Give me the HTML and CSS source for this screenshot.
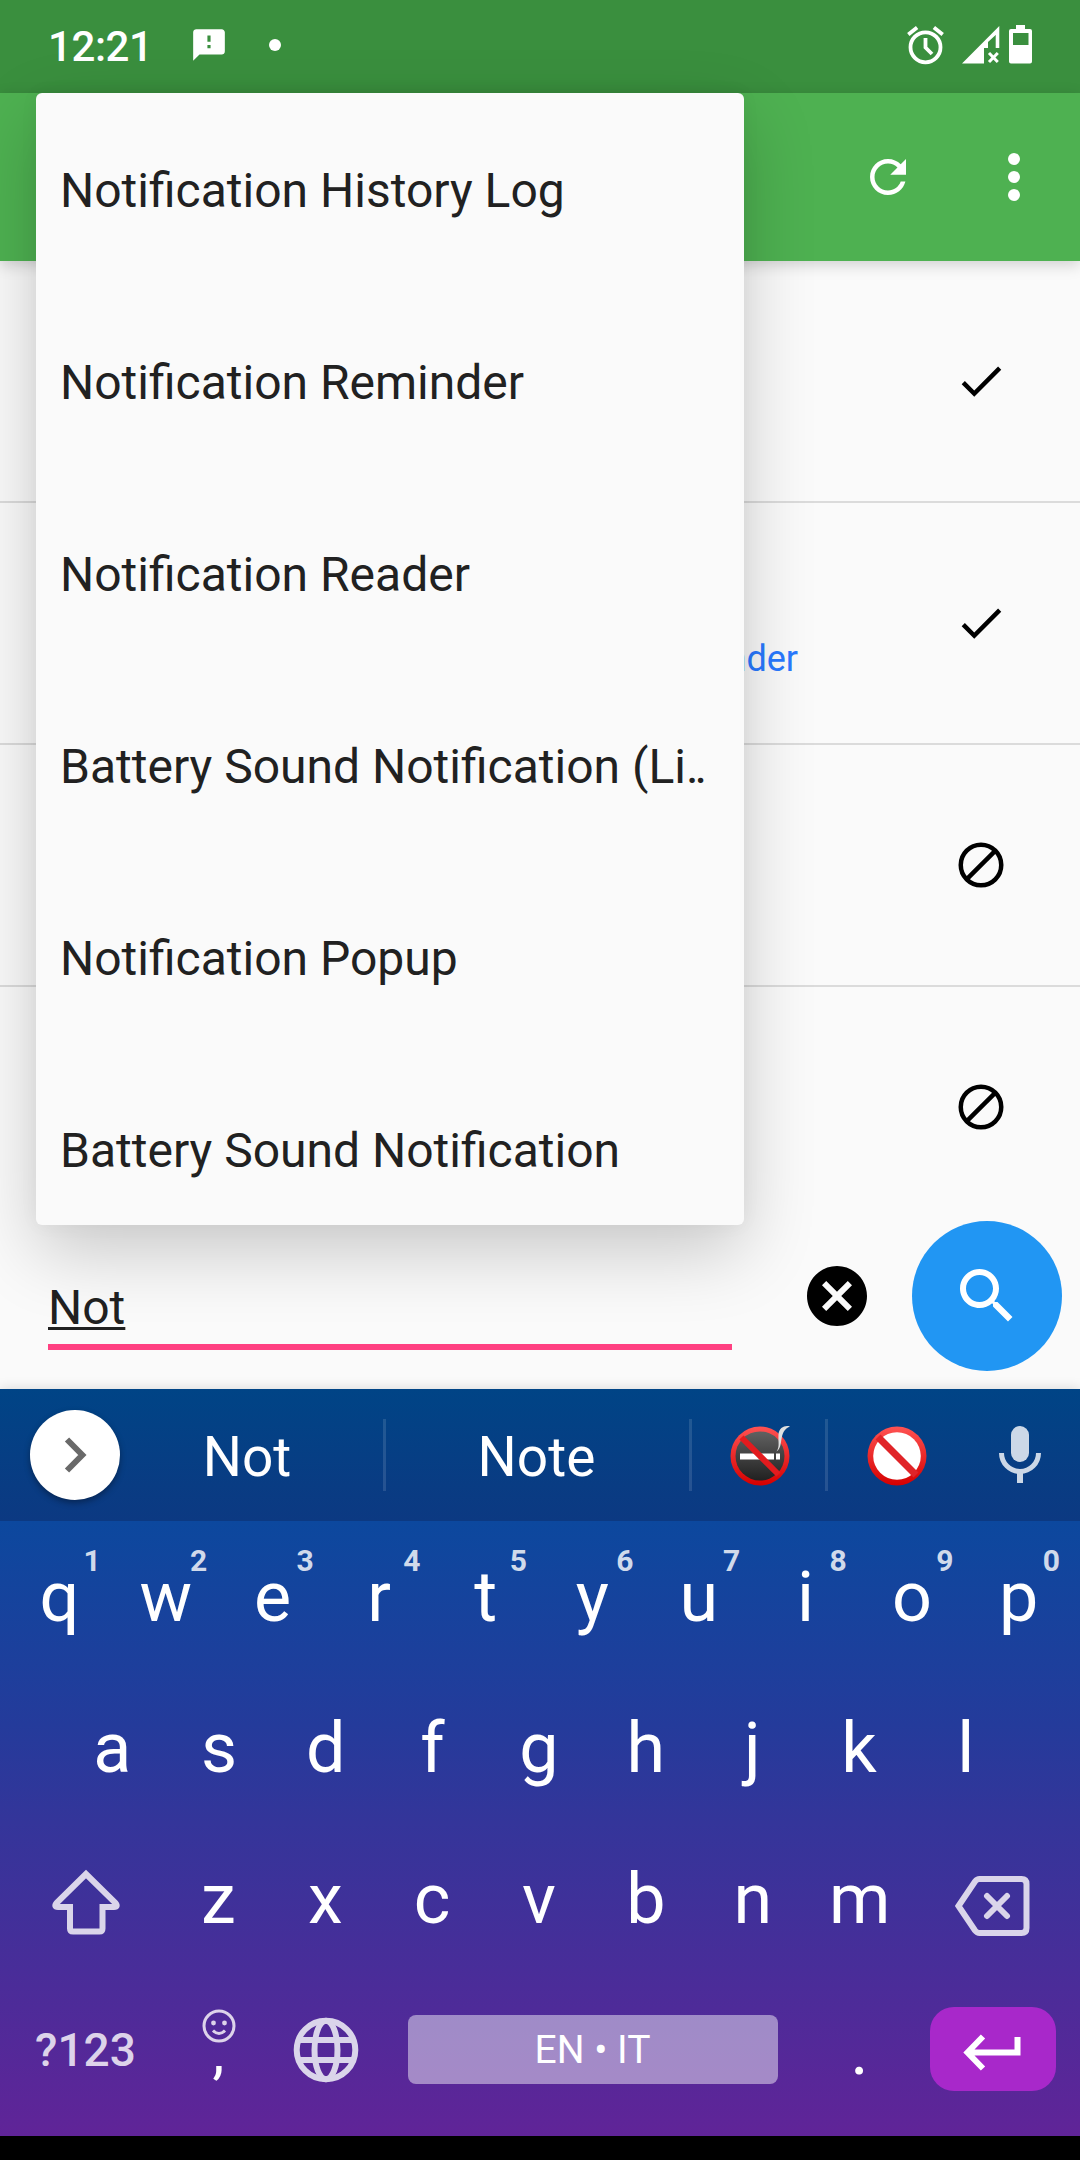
FILE: index.html
```html
<!DOCTYPE html>
<html lang="en">
<head>
  <meta charset="UTF-8" />
  <title>Notification apps</title>
  <link rel="stylesheet" href="styles.css">
</head>
<body>
  <div class="screen">
    <div class="status-bar">
      <span class="clock">12:21</span>
      <svg class="msg-icon" width="38" height="38" viewBox="0 0 24 24"><path d="M20 2H4c-1.1 0-2 .5-2 2v18l4-4h14c1.1 0 2-.5 2-2V4c0-1.100-.9-2-2-2zm-7 12h-2v-2h2v2zm0-4h-2V6h2v4z"/></svg>
      <span class="dot"></span>
      <svg class="status-icons" width="130" height="42" viewBox="904 24 130 42">
        <g fill="none" stroke="#fff">
          <circle cx="925.5" cy="47.300" r="15" stroke-width="3.800"/>
          <path d="M925.500 38v9.500l6.500 6.500M908.300 34.500l8.800-7M942.700 34.500l-8.800-7" stroke-width="3.800"/>
          <path d="M989 53l8.800 9M997.800 53l-8.800 9" stroke-width="3"/>
        </g>
        <path d="M962 63.500h22V48h4v-6l7.700-7v13h3.600V26z"/>
        <path fill-rule="evenodd" d="M1016 25h9v4h5q2 0 2 2v30.500q0 2-2 2h-19q-2 0-2-2V31q0-2 2-2h5zM1013 33v12h15.500V33z"/>
      </svg>
    </div>

    <div class="toolbar">
      <svg width="54" height="54" viewBox="0 0 24 24"><path d="M17.65 6.35C16.2 4.9 14.21 4 12 4c-4.42 0-7.99 3.58-7.99 8s3.57 8 7.99 8c3.730 0 6.840-2.550 7.730-6h-2.080c-.82 2.330-3.040 4-5.650 4-3.310 0-6-2.690-6-6s2.690-6 6-6c1.660 0 3.140.69 4.220 1.780L13 11h7V4l-2.350 2.350z"/></svg>
      <svg width="72" height="72" viewBox="0 0 24 24"><circle cx="12" cy="6" r="2"/><circle cx="12" cy="12" r="2"/><circle cx="12" cy="18" r="2"/></svg>
    </div>

    <div class="list">
      <div class="row">
        <svg width="54" height="54" viewBox="0 0 24 24"><path d="M9 16.170L4.830 12l-1.420 1.410L9 19 21 7l-1.410-1.410z"/></svg>
      </div>
      <div class="row">
        <span class="app-link">Reminder</span>
        <svg width="54" height="54" viewBox="0 0 24 24"><path d="M9 16.170L4.830 12l-1.420 1.410L9 19 21 7l-1.410-1.410z"/></svg>
      </div>
      <div class="row">
        <svg width="54" height="54" viewBox="0 0 24 24"><g fill="none" stroke="#000" stroke-width="2"><circle cx="12" cy="12" r="9"/><path d="M5.600 18.400L18.400 5.600"/></g></svg>
      </div>
      <div class="row last">
        <svg width="54" height="54" viewBox="0 0 24 24"><g fill="none" stroke="#000" stroke-width="2"><circle cx="12" cy="12" r="9"/><path d="M5.600 18.400L18.400 5.600"/></g></svg>
      </div>
    </div>

    <div class="search-bar">
      <div class="search-input"><span>Not</span></div>
      <svg class="clear" width="72" height="72" viewBox="0 0 24 24"><path d="M12 2C6.470 2 2 6.470 2 12s4.470 10 10 10 10-4.470 10-10S17.530 2 12 2zm5 13.590L15.590 17 12 13.410 8.410 17 7 15.590 10.590 12 7 8.410 8.410 7 12 10.590 15.590 7 17 8.410 13.410 12 17 15.590z"/></svg>
      <div class="search-btn">
        <svg width="72" height="72" viewBox="0 0 24 24"><path d="M15.500 14h-.79l-.28-.27C15.410 12.590 16 11.110 16 9.500 16 5.910 13.090 3 9.500 3S3 5.910 3 9.500 5.910 16 9.500 16c1.610 0 3.090-.59 4.230-1.570l.27.28v.79l5 4.990L20.490 19l-4.990-5zm-6 0C7.010 14 5 11.990 5 9.500S7.010 5 9.500 5 14 7.010 14 9.500 11.990 14 9.500 14z"/></svg>
      </div>
    </div>

    <div class="keyboard">
      <div class="suggestions">
        <div class="expand">
          <svg width="30" height="44" viewBox="0 0 30 44"><path d="M7 6.500L22.300 22 7 37.500" fill="none" stroke="#696969" stroke-width="6"/></svg>
        </div>
        <div class="word first">Not</div>
        <div class="word second">Note</div>
        <div class="word emoji">
          <svg width="62" height="62" viewBox="0 0 62 62">
            <defs>
              <linearGradient id="red" x1="0" y1="0" x2="0" y2="1"><stop offset="0" stop-color="#ff5252"/><stop offset="1" stop-color="#d50000"/></linearGradient>
              <linearGradient id="coal" x1="0" y1="0" x2="0" y2="1"><stop offset="0" stop-color="#616161"/><stop offset="1" stop-color="#212121"/></linearGradient>
            </defs>
            <circle cx="31" cy="31" r="29.500" fill="url(#red)"/>
            <circle cx="31" cy="31" r="24.500" fill="url(#coal)"/>
            <path d="M11 28.500h34v6H11zM47 28.500h4v6h-4z" fill="#fff"/>
            <path d="M12.500 12.500l37 37" stroke="#e31b1e" stroke-width="6"/>
            <path d="M47.500 26.500c8-5 1-20 13.500-25-5-1.500-11 1-11.500 8-.5 8 1.500 12-2 17z" fill="#e0e0e0"/>
          </svg>
        </div>
        <div class="word emoji end">
          <svg width="62" height="62" viewBox="0 0 62 62">
            <circle cx="31" cy="31" r="29.500" fill="url(#red)"/>
            <circle cx="31" cy="31" r="23.800" fill="#fff"/>
            <path d="M12 12l38 38" stroke="#e02428" stroke-width="7"/>
          </svg>
        </div>
        <div class="mic">
          <svg width="44" height="58" viewBox="0 0 44 58"><rect x="13" y="0" width="18" height="36" rx="9"/><path d="M3.500 27a18.500 18.500 0 0 0 37 0" fill="none" stroke="#ccd8e7" stroke-width="5"/><rect x="19" y="46" width="6" height="11"/></svg>
        </div>
      </div>

      <div class="keys">
        <div class="key-row">
          <div class="key">q<span class="hint">1</span></div>
          <div class="key">w<span class="hint">2</span></div>
          <div class="key">e<span class="hint">3</span></div>
          <div class="key">r<span class="hint">4</span></div>
          <div class="key">t<span class="hint">5</span></div>
          <div class="key">y<span class="hint">6</span></div>
          <div class="key">u<span class="hint">7</span></div>
          <div class="key">i<span class="hint">8</span></div>
          <div class="key">o<span class="hint">9</span></div>
          <div class="key">p<span class="hint">0</span></div>
        </div>
        <div class="key-row middle">
          <div class="key">a</div>
          <div class="key">s</div>
          <div class="key">d</div>
          <div class="key">f</div>
          <div class="key">g</div>
          <div class="key">h</div>
          <div class="key">j</div>
          <div class="key">k</div>
          <div class="key">l</div>
        </div>
        <div class="key-row">
          <div class="key wide">
            <svg class="shift" width="72" height="70" viewBox="0 0 72 70"><path d="M36 7L6.500 36Q3.500 40 8 40H20v21.500q0 3 3 3h26.500q3 0 3-3V40H64q4.500 0 1.500-4z"/></svg>
          </div>
          <div class="key">z</div>
          <div class="key">x</div>
          <div class="key">c</div>
          <div class="key">v</div>
          <div class="key">b</div>
          <div class="key">n</div>
          <div class="key">m</div>
          <div class="key wide">
            <svg class="backspace" width="80" height="64" viewBox="0 0 80 64"><path d="M5.500 32L22 7.500Q24 5 26.500 5h42q5 0 5 5v44q0 5-5 5h-42q-2.500 0-4.500-2.500zM34 22l20 20M54 22L34 42"/></svg>
          </div>
        </div>
        <div class="key-row">
          <div class="key wide symbols">?123</div>
          <div class="key comma">,
            <svg class="smiley" width="34" height="34" viewBox="0 0 34 34"><g fill="none" stroke="#ddd3ea" stroke-width="3"><circle cx="17" cy="17" r="15"/><path d="M11 21.500q6 6 12 0"/></g><circle cx="11.500" cy="14" r="2.400"/><circle cx="22.500" cy="14" r="2.400"/></svg>
          </div>
          <div class="key">
            <svg class="globe" width="66" height="66" viewBox="0 0 66 66"><circle cx="33" cy="33" r="29.300"/><ellipse cx="33" cy="33" rx="11.500" ry="29.300"/><path d="M6 23h54M6 43h54"/></svg>
          </div>
          <div class="space-cell"><div class="space">EN • IT</div></div>
          <div class="key">.</div>
          <div class="key wide">
            <div class="enter">
              <svg width="60" height="38" viewBox="0 0 60 38"><path d="M55.500 4v15.500H8M21 3.500L5.500 19.500 21 35.500"/></svg>
            </div>
          </div>
        </div>
      </div>
    </div>
    <div class="nav-bar"></div>

    <!-- autocomplete dropdown -->
    <div class="dropdown">
      <div class="option">Notification History Log</div>
      <div class="option">Notification Reminder</div>
      <div class="option">Notification Reader</div>
      <div class="option">Battery Sound Notification (Li<span class="cut">..</span></div>
      <div class="option">Notification Popup</div>
      <div class="option">Battery Sound Notification</div>
    </div>
  </div>
</body>
</html>
```
FILE: styles.css
```css
* {
  box-sizing: border-box;
}
body {
  margin: 0;
  font-family: Roboto, sans-serif;
  background-color: #fafafa;
  color: #212121;
}
svg {
  display: block;
  flex-shrink: 0;
}
.screen {
  position: relative;
  width: 1080px;
  height: 2160px;
  overflow: hidden;
  display: flex;
  flex-direction: column;
}
.status-bar {
  height: 93px;
  background-color: #3a8f3e;
  display: flex;
  align-items: center;
  padding: 0 46px 3px 48px;
  color: #fff;
  fill: #fff;
}
.clock {
  width: 142px;
  font-size: 42px;
  font-weight: 500;
  letter-spacing: -0.4px;
  padding-top: 2px;
}
.dot {
  width: 12px;
  height: 12px;
  margin-left: 41px;
  border-radius: 50%;
  background-color: #fff;
}
.status-icons {
  margin-left: auto;
}
.toolbar {
  height: 168px;
  background-color: #4eb151;
  box-shadow: 0 4px 14px rgba(0, 0, 0, 0.17);
  display: flex;
  align-items: center;
  justify-content: flex-end;
  gap: 63px;
  padding-right: 30px;
  fill: #fff;
  z-index: 1;
}
.list {
  height: 942px;
  overflow: hidden;
}
.row {
  height: 242px;
  border-bottom: 2px solid #dbdbdb;
  display: flex;
  align-items: center;
  justify-content: flex-end;
  padding-right: 72px;
}
.row.last {
  border-bottom: none;
  padding-bottom: 2px;
}
.app-link {
  margin-right: 156px;
  padding-top: 71px;
  font-size: 36px;
  line-height: 42px;
  color: #2979ff;
}
.search-bar {
  height: 186px;
  display: flex;
  align-items: center;
  padding: 0 18px 0 48px;
}
.search-input {
  width: 684px;
  height: 72px;
  margin-top: 36px;
  border-bottom: 6px solid #ff4081;
  font-size: 48px;
  line-height: 60px;
}
.search-input span {
  text-decoration: underline;
  text-decoration-thickness: 3px;
  text-underline-offset: 3px;
}
.clear {
  margin-left: 69px;
}
.search-btn {
  width: 150px;
  height: 150px;
  margin-left: auto;
  border-radius: 50%;
  background-color: #2196f3;
  fill: #fff;
  display: flex;
  align-items: center;
  justify-content: center;
}
.keyboard {
  height: 747px;
  box-shadow: 0 0 12px rgba(0, 0, 0, 0.15);
  color: #fff;
}
.suggestions {
  height: 132px;
  background: linear-gradient(#004486, #0c3982);
  display: flex;
  align-items: center;
  padding-left: 30px;
}
.expand {
  width: 90px;
  height: 90px;
  border-radius: 50%;
  background-color: #fff;
  box-shadow: 0 3px 6px rgba(0, 0, 0, 0.35);
  display: flex;
  align-items: center;
  justify-content: center;
}
.word {
  height: 72px;
  border-right: 3px solid rgba(255, 255, 255, 0.12);
  display: flex;
  align-items: center;
  justify-content: center;
  font-size: 55px;
}
.word.first {
  width: 266px;
  padding: 3px 9px 0 0;
}
.word.second {
  width: 306px;
  padding: 3px 2px 0 0;
}
.word.emoji {
  width: 136px;
  padding: 1px 0 0 3px;
}
.word.end {
  border-right: none;
  padding-left: 2px;
}
.mic {
  flex: 1;
  display: flex;
  justify-content: center;
  padding-right: 4px;
  fill: #ccd8e7;
}
.keys {
  height: 615px;
  background: linear-gradient(#0c489e, #243b9b 33%, #34359a 49%, #602498);
}
.key-row {
  height: 151px;
  display: flex;
  padding: 0 8px 0 6px;
}
.key-row.middle {
  padding: 0 61px 0 59px;
}
.key {
  position: relative;
  flex: 1;
  display: flex;
  align-items: center;
  justify-content: center;
  font-size: 70px;
}
.key.wide {
  flex: 0 0 159px;
}
.hint {
  position: absolute;
  top: 22px;
  right: 12px;
  font-size: 30px;
  font-weight: 700;
  color: #d0daeb;
}
.shift,
.backspace,
.globe {
  fill: none;
  stroke: #dad5ea;
  stroke-width: 6;
  stroke-linecap: round;
}
.shift {
  margin-top: 6px;
}
.backspace {
  margin-top: 14px;
}
.key.symbols {
  font-size: 46px;
  font-weight: 500;
  color: #ddd3ea;
}
.key.comma {
  padding-top: 3px;
  font-size: 60px;
}
.smiley {
  position: absolute;
  top: 35px;
  left: 37px;
  fill: #ddd3ea;
}
.space-cell {
  flex: 0 0 427px;
  display: flex;
  align-items: center;
  justify-content: center;
}
.space {
  width: 370px;
  height: 69px;
  border-radius: 8px;
  background-color: rgba(255, 255, 255, 0.46);
  font-size: 39px;
  line-height: 71px;
  text-align: center;
}
.enter {
  width: 126px;
  height: 84px;
  margin-bottom: 2px;
  border-radius: 24px;
  background-color: #a828ca;
  display: flex;
  align-items: center;
  justify-content: center;
}
.enter svg {
  margin: 6px 2px 0 0;
}
.enter path {
  fill: none;
  stroke: #fff;
  stroke-width: 6;
}
.nav-bar {
  height: 24px;
  background-color: #000;
}
.dropdown {
  position: absolute;
  top: 93px;
  left: 36px;
  width: 708px;
  height: 1132px;
  overflow: hidden;
  background-color: #fafafa;
  border-radius: 6px;
  box-shadow: 0 27px 72px rgba(0, 0, 0, 0.2), 0 0 20px rgba(0, 0, 0, 0.04);
  z-index: 2;
}
.option {
  height: 192px;
  padding: 2px 24px 0;
  font-size: 48px;
  line-height: 192px;
  white-space: nowrap;
}
.cut {
  letter-spacing: -4px;
}
```
